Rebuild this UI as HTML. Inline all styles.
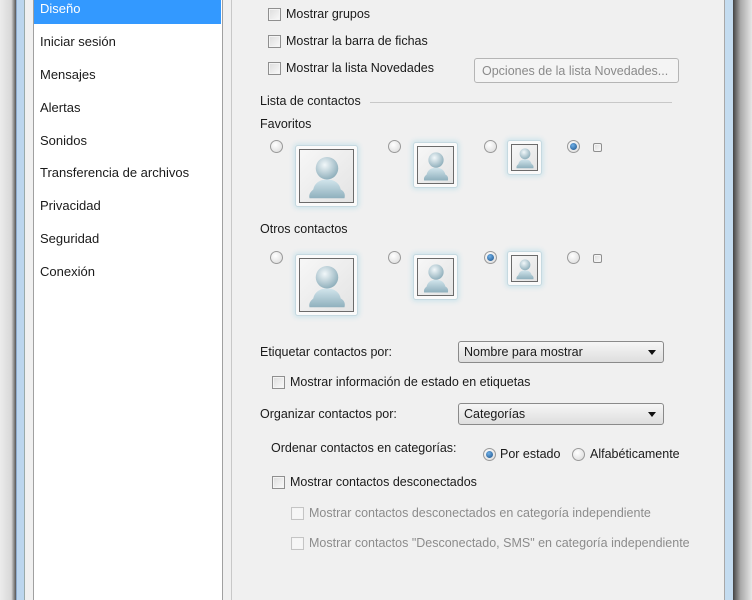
<!DOCTYPE html>
<html><head><meta charset="utf-8"><style>
*{margin:0;padding:0;box-sizing:border-box}
body{width:752px;height:600px;overflow:hidden;background:#f0f0f0;font-family:"Liberation Sans",sans-serif;font-size:12.5px;color:#1a1a1a;position:relative}
.a{position:absolute;white-space:nowrap}
.cb{position:absolute;width:13px;height:13px;border:1px solid #8f8f8f;background:linear-gradient(135deg,#dcdcdc,#fafafa);box-shadow:inset 0 0 0 1px #f4f4f4}
.cb.d{border-color:#c4c4c4;background:#f6f6f6}
.rd{position:absolute;width:13px;height:13px;border-radius:50%;border:1px solid #9a9a9a;background:radial-gradient(circle at 40% 35%,#fff,#d8d8d8)}
.rd.on::after{content:"";position:absolute;left:2px;top:2px;width:7px;height:7px;border-radius:50%;background:radial-gradient(circle at 40% 35%,#6fb0e8,#1a4f86)}
.sel{position:absolute;height:22px;border:1px solid #8a8a8a;border-radius:3px;background:linear-gradient(#f6f6f6,#dedede);padding:3px 0 0 5px}
.sel::after{content:"";position:absolute;right:7px;top:8px;border-left:4px solid transparent;border-right:4px solid transparent;border-top:5px solid #111}
.fr{position:absolute;border:1px solid #c6d9e0;border-radius:3px;background:#fafafa;box-shadow:0 0 4px 2px #d3e6ec}
.fr svg{position:absolute;border:1px solid #6b6b6b;background:linear-gradient(135deg,#f7f7f7,#e4e4e4)}
.dis{color:#8c8c8c}
</style></head><body>
<svg width="0" height="0" style="position:absolute"><defs>
<linearGradient id="g" x1="0" y1="0" x2="0" y2="1"><stop offset="0" stop-color="#d2e5ec"/><stop offset="1" stop-color="#8fb0bd"/></linearGradient>
<radialGradient id="h" cx=".4" cy=".35" r=".7"><stop offset="0" stop-color="#f2f8fa"/><stop offset="1" stop-color="#8aabb8"/></radialGradient>
<symbol id="p" viewBox="0 0 40 40"><path d="M6 37 C5 33 8 31 9 30 C10 25 14 22 20 22 C26 22 30 25 31 30 C33 31 35 33 34 37 Z" fill="url(#g)"/><circle cx="20" cy="13" r="9" fill="url(#h)"/></symbol>
</defs></svg>
<div class="a" style="left:0;top:0;width:16px;height:600px;background:linear-gradient(90deg,#ececec,#d8d8d8 70%,#555 100%)"></div>
<div class="a" style="left:16px;top:0;width:8px;height:600px;background:#bcd6ee;border-left:1px solid #8eaacb"></div>
<div class="a" style="left:24px;top:0;width:10px;height:600px;background:#f0f0f0;border-left:1px solid #9aa"></div>
<div class="a" style="left:33px;top:0;width:190px;height:600px;background:#fff;border-left:1px solid #a0a0a0;border-right:1px solid #a0a0a0"></div>
<div class="a" style="left:34px;top:0;width:187px;height:24px;background:#3399ff"></div>
<div class="a" style="left:40px;top:1px;color:#fff;font-size:13px">Diseño</div>
<div class="a" style="left:40px;top:34px;font-size:13px">Iniciar sesión</div>
<div class="a" style="left:40px;top:67px;font-size:13px">Mensajes</div>
<div class="a" style="left:40px;top:100px;font-size:13px">Alertas</div>
<div class="a" style="left:40px;top:133px;font-size:13px">Sonidos</div>
<div class="a" style="left:40px;top:165px;font-size:13px">Transferencia de archivos</div>
<div class="a" style="left:40px;top:198px;font-size:13px">Privacidad</div>
<div class="a" style="left:40px;top:231px;font-size:13px">Seguridad</div>
<div class="a" style="left:40px;top:264px;font-size:13px">Conexión</div>
<div class="a" style="left:231px;top:0;width:1px;height:600px;background:#c8c8c8"></div>
<div class="a" style="left:724px;top:0;width:1px;height:600px;background:#a8a8a8"></div>
<div class="a" style="left:725px;top:0;width:8px;height:600px;background:#c4dcf0"></div>
<div class="a" style="left:733px;top:0;width:19px;height:600px;background:linear-gradient(90deg,#444,#aaa 40%,#e6e6e6)"></div>

<div class="cb" style="left:268px;top:8px"></div><div class="a" style="left:286px;top:7px">Mostrar grupos</div>
<div class="cb" style="left:268px;top:35px"></div><div class="a" style="left:286px;top:34px">Mostrar la barra de fichas</div>
<div class="cb" style="left:268px;top:62px"></div><div class="a" style="left:286px;top:61px">Mostrar la lista Novedades</div>
<div class="a" style="left:474px;top:58px;width:205px;height:25px;border:1px solid #b5b5b5;border-radius:3px;background:#f4f4f4;color:#8a8a8a;padding:5px 0 0 7px">Opciones de la lista Novedades...</div>
<div class="a" style="left:260px;top:94px">Lista de contactos</div>
<div class="a" style="left:370px;top:102px;width:302px;height:1px;background:#c8c8c8"></div>
<div class="a" style="left:260px;top:117px">Favoritos</div>

<div class="rd" style="left:270px;top:140px"></div>
<div class="fr" style="left:295px;top:145px;width:63px;height:62px"><svg style="left:3px;top:3px;width:55px;height:54px"><use href="#p" x="2" y="2" width="50" height="50"/></svg></div>
<div class="rd" style="left:388px;top:140px"></div>
<div class="fr" style="left:413px;top:142px;width:45px;height:46px"><svg style="left:3px;top:3px;width:37px;height:38px"><use href="#p" x="1" y="2" width="34" height="34"/></svg></div>
<div class="rd" style="left:484px;top:140px"></div>
<div class="fr" style="left:507px;top:140px;width:35px;height:35px"><svg style="left:3px;top:3px;width:27px;height:27px"><use href="#p" x="1" y="1" width="24" height="24"/></svg></div>
<div class="rd on" style="left:567px;top:140px"></div>
<div class="cb" style="left:593px;top:143px;width:9px;height:9px;border-radius:2px"></div>

<div class="a" style="left:260px;top:222px">Otros contactos</div>
<div class="rd" style="left:270px;top:251px"></div>
<div class="fr" style="left:295px;top:254px;width:63px;height:62px"><svg style="left:3px;top:3px;width:55px;height:54px"><use href="#p" x="2" y="2" width="50" height="50"/></svg></div>
<div class="rd" style="left:388px;top:251px"></div>
<div class="fr" style="left:413px;top:254px;width:45px;height:46px"><svg style="left:3px;top:3px;width:37px;height:38px"><use href="#p" x="1" y="2" width="34" height="34"/></svg></div>
<div class="rd on" style="left:484px;top:251px"></div>
<div class="fr" style="left:507px;top:251px;width:35px;height:35px"><svg style="left:3px;top:3px;width:27px;height:27px"><use href="#p" x="1" y="1" width="24" height="24"/></svg></div>
<div class="rd" style="left:567px;top:251px"></div>
<div class="cb" style="left:593px;top:254px;width:9px;height:9px;border-radius:2px"></div>

<div class="a" style="left:260px;top:345px">Etiquetar contactos por:</div>
<div class="sel" style="left:458px;top:341px;width:206px">Nombre para mostrar</div>
<div class="cb" style="left:272px;top:376px"></div><div class="a" style="left:290px;top:375px">Mostrar información de estado en etiquetas</div>
<div class="a" style="left:260px;top:407px">Organizar contactos por:</div>
<div class="sel" style="left:458px;top:403px;width:206px">Categorías</div>
<div class="a" style="left:271px;top:441px">Ordenar contactos en categorías:</div>
<div class="rd on" style="left:483px;top:448px"></div><div class="a" style="left:500px;top:447px">Por estado</div>
<div class="rd" style="left:572px;top:448px"></div><div class="a" style="left:590px;top:447px">Alfabéticamente</div>
<div class="cb" style="left:272px;top:476px"></div><div class="a" style="left:290px;top:475px">Mostrar contactos desconectados</div>
<div class="cb d" style="left:291px;top:507px"></div><div class="a dis" style="left:309px;top:506px">Mostrar contactos desconectados en categoría independiente</div>
<div class="cb d" style="left:291px;top:537px"></div><div class="a dis" style="left:309px;top:536px">Mostrar contactos "Desconectado, SMS" en categoría independiente</div>
</body></html>
